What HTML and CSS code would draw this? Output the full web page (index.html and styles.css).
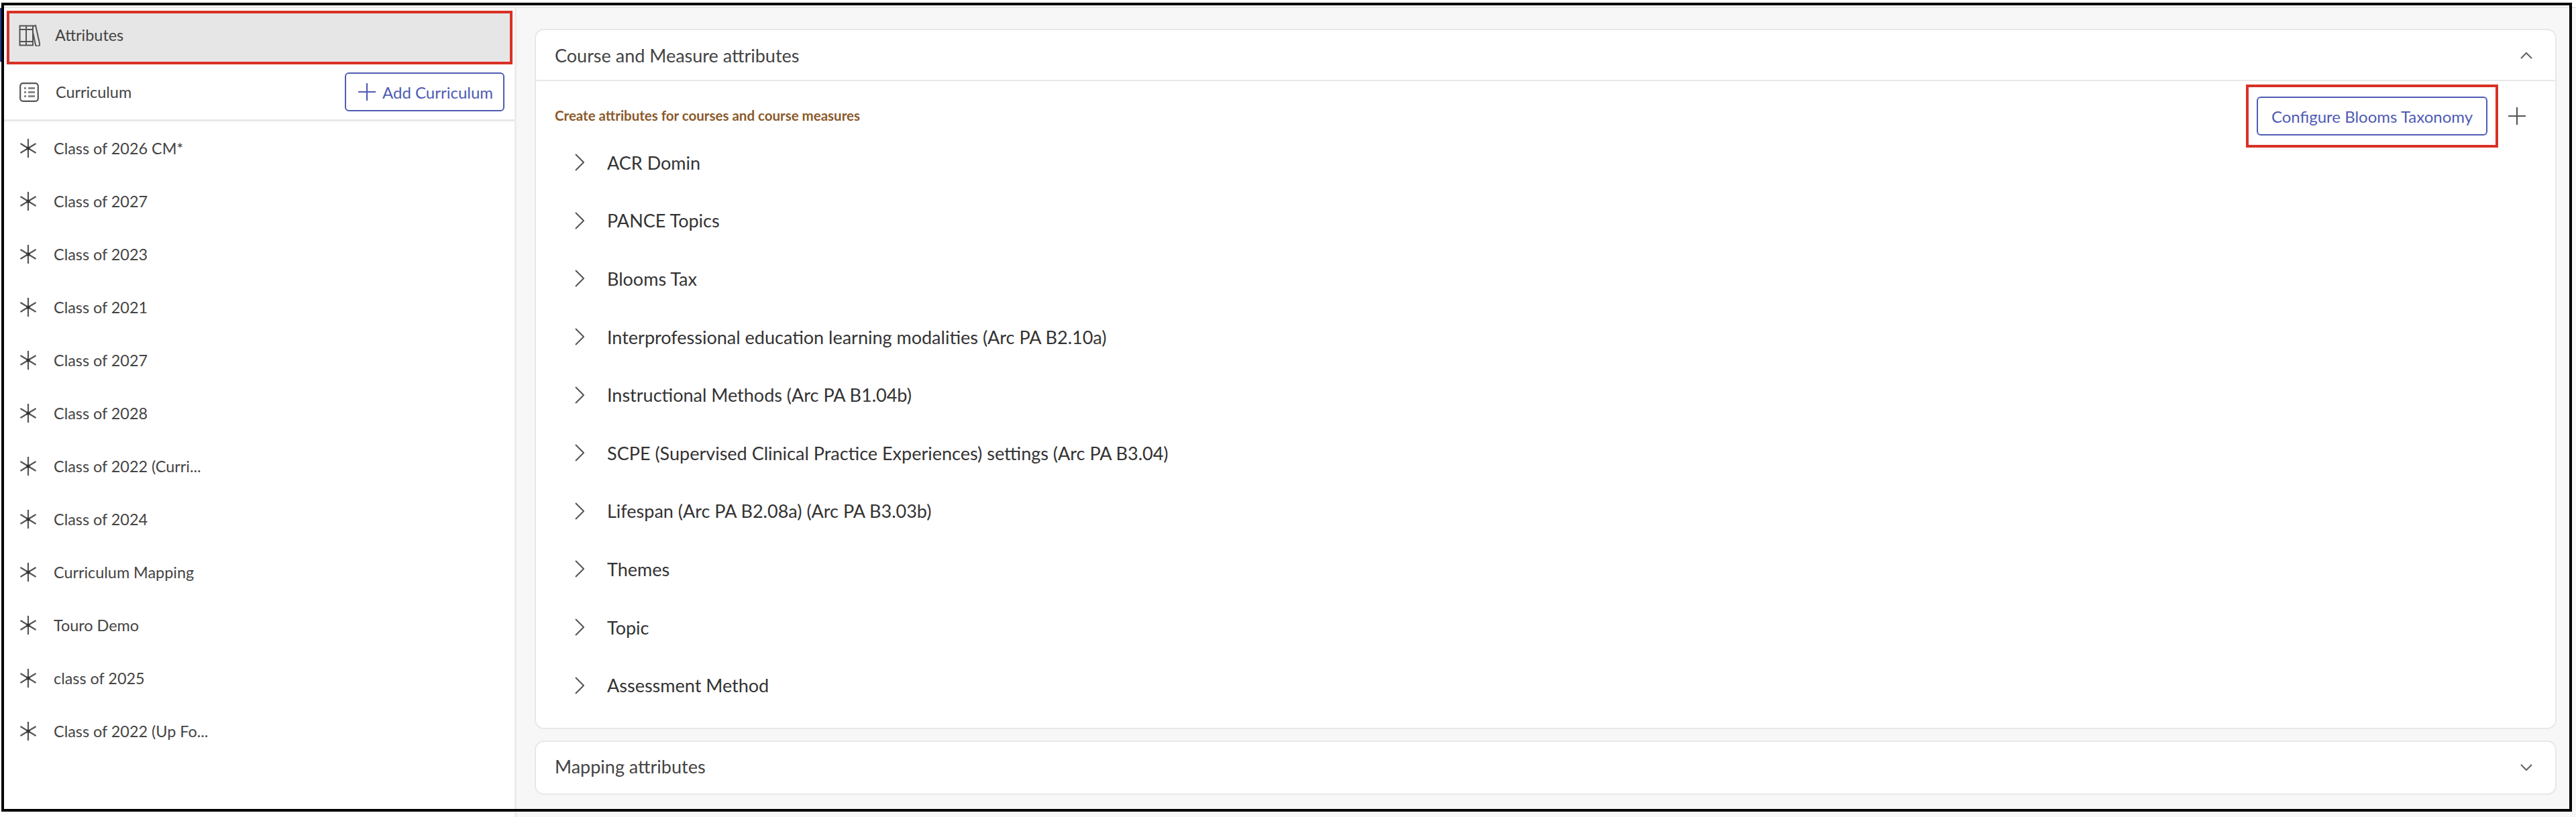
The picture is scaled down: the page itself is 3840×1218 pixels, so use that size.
FILE: index.html
```html
<!DOCTYPE html>
<html lang="en">
<head>
    <meta charset="UTF-8">
    <title>Attributes</title>
    <link rel="stylesheet" href="styles.css">
</head>
<body>
<svg class="sprites" width="0" height="0">
    <symbol id="star" viewBox="0 0 26 28">
        <path d="M13 0V28M1.5 7L24.5 21M24.5 7L1.5 21" fill="none" stroke="#555" stroke-width="2.2"/>
        <circle cx="13" cy="14" r="2.6" fill="#333"/>
    </symbol>
    <symbol id="chev-right" viewBox="0 0 14 26">
        <path d="M1 1L13 13L1 25" fill="none" stroke="#555" stroke-width="2"/>
    </symbol>
</svg>

<div class="app">
    <div class="rail"><div class="rail-active"></div></div>

    <aside class="sidebar">
        <div class="side-row active">
            <svg class="icon-books" viewBox="0 0 32 33" fill="none" stroke="#555" stroke-width="2">
                <path d="M1.5 2.5H21V31.5H1.5ZM11 2.5V31.5M1.5 8H21M1.5 26H21"/>
                <path d="M21 3L25 2L31 28.5A3 3 0 0 1 25 31L21 12"/>
            </svg>
            <span class="side-title">Attributes</span>
        </div>
        <div class="side-row curriculum">
            <svg class="icon-list" viewBox="0 0 29 29" fill="none" stroke="#555">
                <rect x="1.2" y="1.2" width="26.6" height="26.6" rx="4" stroke-width="2.2"/>
                <path d="M7 8.5H10M7 14.5H10M7 20.5H10M13 8.5H23M13 14.5H23M13 20.5H23" stroke="#888" stroke-width="3"/>
            </svg>
            <span class="side-title">Curriculum</span>
            <button class="btn add-btn">
                <svg class="icon-plus" viewBox="0 0 26 26"><path d="M13 0V26M0 13H26" stroke="#4f5bb5" stroke-width="2.2"/></svg>
                Add Curriculum
            </button>
        </div>
        <ul class="class-list">
            <li><svg class="icon-star"><use href="#star"/></svg>Class of 2026 CM*</li>
            <li><svg class="icon-star"><use href="#star"/></svg>Class of 2027</li>
            <li><svg class="icon-star"><use href="#star"/></svg>Class of 2023</li>
            <li><svg class="icon-star"><use href="#star"/></svg>Class of 2021</li>
            <li><svg class="icon-star"><use href="#star"/></svg>Class of 2027</li>
            <li><svg class="icon-star"><use href="#star"/></svg>Class of 2028</li>
            <li><svg class="icon-star"><use href="#star"/></svg>Class of 2022 (Curri...</li>
            <li><svg class="icon-star"><use href="#star"/></svg>Class of 2024</li>
            <li><svg class="icon-star"><use href="#star"/></svg>Curriculum Mapping</li>
            <li><svg class="icon-star"><use href="#star"/></svg>Touro Demo</li>
            <li><svg class="icon-star"><use href="#star"/></svg>class of 2025</li>
            <li><svg class="icon-star"><use href="#star"/></svg>Class of 2022 (Up Fo...</li>
        </ul>
    </aside>

    <main class="content">
        <section class="card">
            <header class="card-head">
                <span>Course and Measure attributes</span>
                <svg class="icon-toggle" viewBox="0 0 18 11"><path d="M1 10L9 2L17 10" fill="none" stroke="#666" stroke-width="2.2"/></svg>
            </header>
            <div class="toolbar">
                <span class="hint">Create attributes for courses and course measures</span>
                <button class="btn config-btn">Configure Blooms Taxonomy</button>
                <svg class="icon-add" viewBox="0 0 26 26"><path d="M13 0V26M0 13H26" stroke="#555" stroke-width="2.2"/></svg>
            </div>
            <ul class="attr-list">
                <li><svg class="icon-chev"><use href="#chev-right"/></svg>ACR Domin</li>
                <li><svg class="icon-chev"><use href="#chev-right"/></svg>PANCE Topics</li>
                <li><svg class="icon-chev"><use href="#chev-right"/></svg>Blooms Tax</li>
                <li><svg class="icon-chev"><use href="#chev-right"/></svg>Interprofessional education learning modalities (Arc PA B2.10a)</li>
                <li><svg class="icon-chev"><use href="#chev-right"/></svg>Instructional Methods (Arc PA B1.04b)</li>
                <li><svg class="icon-chev"><use href="#chev-right"/></svg>SCPE (Supervised Clinical Practice Experiences) settings (Arc PA B3.04)</li>
                <li><svg class="icon-chev"><use href="#chev-right"/></svg>Lifespan (Arc PA B2.08a) (Arc PA B3.03b)</li>
                <li><svg class="icon-chev"><use href="#chev-right"/></svg>Themes</li>
                <li><svg class="icon-chev"><use href="#chev-right"/></svg>Topic</li>
                <li><svg class="icon-chev"><use href="#chev-right"/></svg>Assessment Method</li>
            </ul>
        </section>
        <section class="card closed">
            <header class="card-head">
                <span>Mapping attributes</span>
                <svg class="icon-toggle" viewBox="0 0 18 11"><path d="M1 1L9 9L17 1" fill="none" stroke="#666" stroke-width="2.2"/></svg>
            </header>
        </section>
    </main>
</div>

<!-- black frame drawn over the whole screenshot -->
<div class="frame"></div>
</body>
</html>
```

FILE: styles.css
```css
/* General styles */
html, body {
    margin: 0;
    padding: 0;
    height: 1218px;
    overflow: hidden;
    background-color: #fff;
}

body {
    font-family: "Lato", "Noto Sans", sans-serif;
    color: #333;
    padding-top: 10px;
    box-sizing: border-box;
}

.sprites {
    position: absolute;
}

ul {
    list-style: none;
    margin: 0;
    padding: 0;
}

.app {
    display: flex;
    height: 1208px;
    border-top: 2px solid #e8e8e8;
}

/* Sidebar */
.rail {
    width: 2px;
    flex: none;
}

.rail-active {
    height: 80px;
    background-color: #2b3a8c;
}

.sidebar {
    width: 768px;
    flex: none;
    box-sizing: border-box;
    padding-top: 4px;
    border-right: 3px solid #ececec;
    background-color: #fff;
}

.side-row {
    display: flex;
    align-items: center;
    box-sizing: border-box;
    margin-left: 8px;
    width: 754px;
}

.side-row.active {
    height: 80px;
    background-color: #e6e6e6;
    border: 4px solid #d93025;
    padding: 0 0 8px 14px;
}

.side-title {
    font-size: 23.4px;
    color: #444;
}

.icon-books {
    width: 32px;
    height: 33px;
    margin-right: 22px;
}

.curriculum {
    height: 85px;
    padding: 0 15px 0 27px;
    margin-left: 0;
    width: 765px;
    border-bottom: 3px solid #e8e8e8;
}

.curriculum .side-title {
    flex: 1;
}

.icon-list {
    width: 29px;
    height: 29px;
    margin-right: 25px;
}

.class-list li {
    display: flex;
    align-items: center;
    height: 79px;
    padding-left: 27px;
    font-size: 23.4px;
    color: #444;
}

.icon-star {
    width: 26px;
    height: 28px;
    margin-right: 25px;
    flex: none;
}

/* Buttons */
.btn {
    display: inline-flex;
    align-items: center;
    height: 58px;
    box-sizing: border-box;
    background-color: #fff;
    border: 2px solid #4f5bb5;
    border-radius: 6px;
    font-family: inherit;
    font-size: 24px;
    color: #4f5bb5;
    cursor: pointer;
}

.add-btn {
    width: 238px;
    padding: 0 0 0 18px;
}

.icon-plus {
    width: 26px;
    height: 26px;
    margin-right: 10px;
}

.config-btn {
    position: relative;
    width: 344px;
    justify-content: center;
    padding: 0;
    margin-right: 31px;
}

/* red annotation around the button */
.config-btn::after {
    content: "";
    position: absolute;
    top: -20px;
    bottom: -20px;
    left: -18px;
    right: -18px;
    border: 4px solid #d93025;
}

/* Main area */
.content {
    flex: 1;
    box-sizing: border-box;
    padding: 31px 29px 0 27px;
    background-color: #f7f7f7;
    display: flex;
    flex-direction: column;
    gap: 17px;
}

.card {
    background-color: #fff;
    border: 2px solid #e8e8e8;
    border-radius: 14px;
}

.card-head {
    display: flex;
    align-items: center;
    justify-content: space-between;
    height: 74px;
    padding: 0 34px 0 28px;
    font-size: 27px;
    color: #444;
    border-bottom: 2px solid #e8e8e8;
}

.card.closed .card-head {
    height: 77px;
    border-bottom: none;
}

.card.closed .card-head span {
    margin-bottom: 4px;
}

.icon-toggle {
    width: 18px;
    height: 11px;
}

.toolbar {
    display: flex;
    align-items: center;
    padding: 23px 44px 0 28px;
    margin-bottom: -3px;
}

.hint {
    flex: 1;
    font-size: 20.5px;
    font-weight: 700;
    color: #8a5a2b;
    margin-bottom: 3px;
}

.icon-add {
    width: 26px;
    height: 26px;
}

.attr-list {
    padding-bottom: 20px;
}

.attr-list li {
    display: flex;
    align-items: center;
    height: 86.6px;
    padding-left: 58px;
    font-size: 27px;
    color: #333;
}

.icon-chev {
    width: 14px;
    height: 26px;
    margin-right: 34px;
    flex: none;
}

/* Frame */
.frame {
    position: absolute;
    left: 2px;
    top: 4px;
    width: 3832px;
    height: 1206px;
    box-sizing: border-box;
    border: 4px solid #000;
    pointer-events: none;
}
```
